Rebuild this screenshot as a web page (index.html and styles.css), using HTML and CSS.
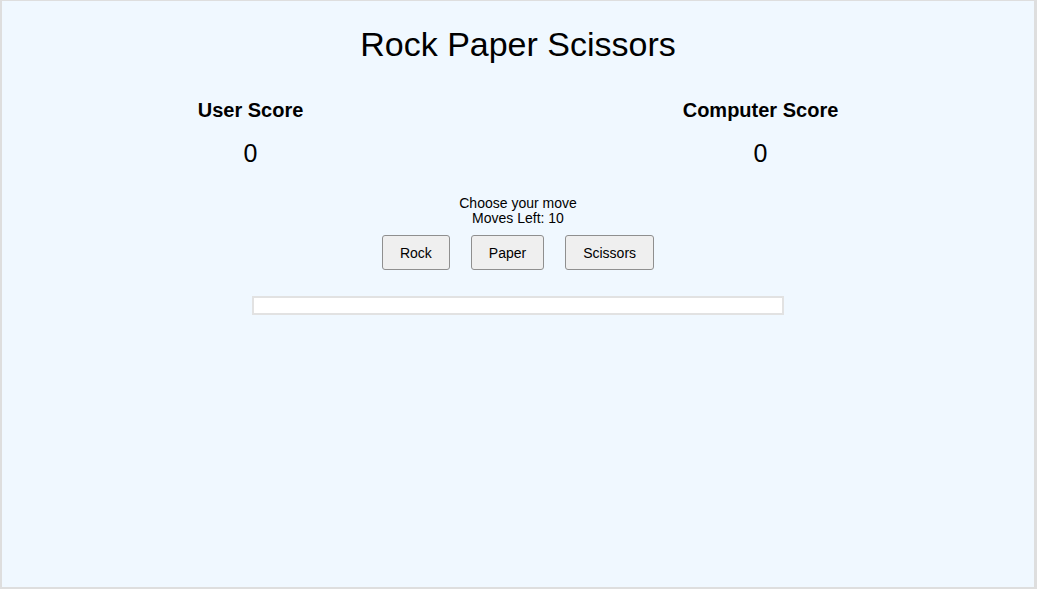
FILE: index.html
```html
<!DOCTYPE html>
<html lang="en">
<head>
<meta charset="utf-8">
<title>Rock Paper Scissors</title>
<link rel="stylesheet" href="styles.css">
</head>
<body>
<div class="page">
  <h1 class="title">Rock Paper Scissors</h1>
  <div class="scores">
    <div class="score">
      <h2 class="score-label">User Score</h2>
      <div class="score-value">0</div>
    </div>
    <div class="score">
      <h2 class="score-label">Computer Score</h2>
      <div class="score-value">0</div>
    </div>
  </div>
  <div class="prompt">
    <div>Choose your move</div>
    <div>Moves Left: 10</div>
  </div>
  <div class="moves">
    <button class="move">Rock</button>
    <button class="move">Paper</button>
    <button class="move">Scissors</button>
  </div>
  <div class="result"></div>
</div>
</body>
</html>
```

FILE: styles.css
```css
html, body {
  margin: 0;
  padding: 0;
}
body {
  font-family: "Liberation Sans", Arial, sans-serif;
  color: #000;
  background: #dedede;
}
.page {
  height: 589px;
  box-sizing: border-box;
  border-style: solid;
  border-color: #dedede;
  border-width: 1px 3px 2px 2px;
  background: #f0f8ff;
  display: flex;
  flex-direction: column;
  align-items: center;
}
.title {
  margin: 24px 0 0;
  font-size: 34px;
  font-weight: normal;
  line-height: 39px;
  text-align: center;
}
.scores {
  align-self: stretch;
  margin: 35px 6px 0;
  display: flex;
  justify-content: space-around;
}
.score {
  display: flex;
  flex-direction: column;
  align-items: center;
}
.score-label {
  margin: 0;
  font-size: 20px;
  font-weight: bold;
  line-height: 23px;
}
.score-value {
  margin-top: 17px;
  font-size: 25px;
  line-height: 28px;
}
.prompt {
  margin-top: 29px;
  font-size: 14px;
  line-height: 15px;
  text-align: center;
}
.moves {
  margin-top: 9px;
  display: flex;
  gap: 21px;
}
.move {
  height: 35px;
  padding: 0 17px;
  font-family: "Liberation Sans", Arial, sans-serif;
  font-size: 14px;
  color: #000;
  background: #efefef;
  border: 1px solid #8f8f8f;
  border-radius: 3px;
}
.result {
  margin-top: 26px;
  width: 532px;
  height: 19px;
  box-sizing: border-box;
  background: #fff;
  border: 2px solid #e2e2e2;
}
```
